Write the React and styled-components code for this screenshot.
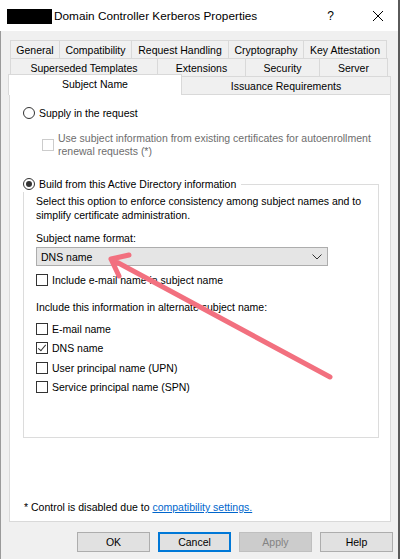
import React from 'react';
import styled, { createGlobalStyle } from 'styled-components';

const GlobalStyle = createGlobalStyle`
	html, body {
		margin: 0;
		padding: 0;
		background: #f0f0f0;
	}
	body {
		font-family: 'Liberation Sans', Arial, sans-serif;
		font-size: 10.5px;
		color: #000;
	}
`;

const row1 = [
	['General', 50],
	['Compatibility', 73],
	['Request Handling', 98],
	['Cryptography', 76],
	['Key Attestation', 84],
];
const row2 = [
	['Superseded Templates', 148],
	['Extensions', 89],
	['Security', 75],
	['Server', 69],
];
const altNames = [
	['E-mail name', false],
	['DNS name', true],
	['User principal name (UPN)', false],
	['Service principal name (SPN)', false],
];

const App = () => {
	return (
		<>
			<GlobalStyle />
			<Window>
				<TitleBar>
					<Redacted />
					<Title>Domain Controller Kerberos Properties</Title>
					<TitleButtons>
						<HelpGlyph>?</HelpGlyph>
						<CloseGlyph>
							<svg width='12' height='12' viewBox='0 0 12 12'>
								<path d='M1 1 L11 11 M11 1 L1 11' stroke='#000' strokeWidth='1' fill='none' />
							</svg>
						</CloseGlyph>
					</TitleButtons>
				</TitleBar>

				<Body>
					<TabRow>
						{row1.map(([label, w]) => (
							<Tab key={label} w={w}>
								{label}
							</Tab>
						))}
					</TabRow>
					<TabRow>
						{row2.map(([label, w]) => (
							<Tab key={label} w={w}>
								{label}
							</Tab>
						))}
					</TabRow>
					<ActiveRow>
						<ActiveTab>Subject Name</ActiveTab>
						<Tab w={210}>Issuance Requirements</Tab>
					</ActiveRow>

					<Panel>
						<OptionRow indent={13} top={11}>
							<Radio />
							<span>Supply in the request</span>
						</OptionRow>
						<DisabledOption>
							<Check disabled />
							<span>
								Use subject information from existing certificates for autoenrollment
								<br />
								renewal requests (*)
							</span>
						</DisabledOption>

						<Group>
							<Legend>
								<Radio checked />
								<span>Build from this Active Directory information</span>
							</Legend>
							<Text>
								Select this option to enforce consistency among subject names and to
								<br />
								simplify certificate administration.
							</Text>
							<Label top={9}>Subject name format:</Label>
							<Select>
								<span>DNS name</span>
								<svg width='10' height='6' viewBox='0 0 10 6'>
									<path d='M0.5 0.5 L5 5 L9.5 0.5' stroke='#333' strokeWidth='1' fill='none' />
								</svg>
							</Select>
							<OptionRow top={7}>
								<Check />
								<span>Include e-mail name in subject name</span>
							</OptionRow>
							<Label top={13}>Include this information in alternate subject name:</Label>
							<CheckList>
								{altNames.map(([label, on]) => (
									<OptionRow key={label}>
										<Check checked={on} />
										<span>{label}</span>
									</OptionRow>
								))}
							</CheckList>
						</Group>

						<Footer>
							* Control is disabled due to <LinkText href='#'>compatibility settings.</LinkText>
						</Footer>
					</Panel>

					<Buttons>
						<Button>OK</Button>
						<Button focused>Cancel</Button>
						<Button disabled>Apply</Button>
						<Button>Help</Button>
					</Buttons>
				</Body>

				{/* annotation arrow drawn over the dialog */}
				<Arrow width='400' height='559' viewBox='0 0 400 559'>
					<path
						d='M330 377 L111 259 M111 259 L129 255 M111 259 L119 276'
						stroke='#f2707f'
						strokeWidth='5'
						strokeLinecap='round'
						strokeLinejoin='round'
						fill='none'
					/>
				</Arrow>
			</Window>
		</>
	);
};

export default App;

export const Window = styled.div`
	position: relative;
	width: 400px;
	height: 559px;
	box-sizing: border-box;
	display: flex;
	flex-direction: column;
	background: #f0f0f0;
	border-right: 2px solid #5a5a5a;
	overflow: hidden;
`;
export const TitleBar = styled.div`
	height: 31px;
	flex-shrink: 0;
	background: #fff;
	display: flex;
	align-items: center;
	padding-left: 7px;
	font-size: 11.8px;
`;
export const Redacted = styled.div`
	width: 45px;
	height: 15px;
	background: #000;
	margin-top: 1px;
`;
export const Title = styled.div`
	margin-left: 2px;
`;
export const TitleButtons = styled.div`
	margin-left: auto;
	display: flex;
	align-items: center;
	padding-right: 14px;
	gap: 38px;
`;
export const HelpGlyph = styled.span`
	font-size: 12px;
`;
export const CloseGlyph = styled.span`
	display: flex;
`;
export const Body = styled.div`
	flex: 1;
	display: flex;
	flex-direction: column;
	padding: 9px 7px 0 8px;
	border-left: 1px solid #9a9a9a;
`;
export const TabRow = styled.div`
	display: flex;
	height: 18px;
	padding-left: 1px;
`;
export const Tab = styled.div`
	box-sizing: border-box;
	width: ${({ w }) => w}px;
	height: 18px;
	display: flex;
	align-items: center;
	justify-content: center;
	border: 1px solid #d9d9d9;
	border-bottom: none;
	margin-left: -1px;
	background: #f0f0f0;
	white-space: nowrap;
	&:first-child {
		margin-left: 0;
	}
`;
export const ActiveRow = styled.div`
	display: flex;
	align-items: flex-end;
	height: 20px;
	margin-top: -2px;
	padding-left: 1px;
	position: relative;
	z-index: 1;
`;
export const ActiveTab = styled.div`
	box-sizing: border-box;
	width: 174px;
	height: 21px;
	margin: 0 0 -1px -2px;
	display: flex;
	align-items: center;
	justify-content: center;
	padding-bottom: 2px;
	background: #fff;
	border: 1px solid #d9d9d9;
	border-bottom: none;
`;
export const Panel = styled.div`
	box-sizing: border-box;
	height: 428px;
	background: #fff;
	border: 1px solid #d9d9d9;
	display: flex;
	flex-direction: column;
	padding-bottom: 7px;
`;
export const OptionRow = styled.div`
	display: flex;
	align-items: center;
	height: 14px;
	gap: 4px;
	margin-top: ${({ top }) => top || 0}px;
	padding-left: ${({ indent }) => indent || 0}px;
	white-space: nowrap;
`;
export const DisabledOption = styled.div`
	display: flex;
	align-items: center;
	gap: 4px;
	margin-top: 12px;
	padding-left: 32px;
	line-height: 13px;
	color: #6d6d6d;
`;
export const Radio = styled.span`
	box-sizing: border-box;
	width: 12px;
	height: 12px;
	border-radius: 50%;
	border: 1px solid #333;
	background: #fff;
	flex-shrink: 0;
	display: flex;
	align-items: center;
	justify-content: center;
	&::after {
		content: '';
		display: ${({ checked }) => (checked ? 'block' : 'none')};
		width: 6px;
		height: 6px;
		border-radius: 50%;
		background: #333;
	}
`;
export const Check = styled.span`
	box-sizing: border-box;
	width: 12px;
	height: 12px;
	flex-shrink: 0;
	border: 1px solid ${({ disabled }) => (disabled ? '#cccccc' : '#333')};
	background: #fff;
	position: relative;
	&::after {
		content: '';
		display: ${({ checked }) => (checked ? 'block' : 'none')};
		position: absolute;
		left: 3px;
		top: 0px;
		width: 3px;
		height: 7px;
		border: solid #333;
		border-width: 0 1px 1px 0;
		transform: rotate(40deg);
	}
`;
export const Group = styled.fieldset`
	margin: 18px 0 0 13px;
	width: 356px;
	box-sizing: border-box;
	padding: 2px 0 43px 12px;
	border: 1px solid #dcdcdc;
	min-width: 0;
`;
export const Legend = styled.legend`
	display: flex;
	align-items: center;
	gap: 4px;
	height: 16px;
	padding: 0 5px 0 0;
	margin-left: -13px;
	background: #fff;
`;
export const Text = styled.div`
	line-height: 14px;
`;
export const Label = styled.div`
	line-height: 14px;
	margin-top: ${({ top }) => top}px;
`;
export const Select = styled.div`
	box-sizing: border-box;
	width: 292px;
	height: 19px;
	margin-top: 2px;
	background: #e5e5e5;
	border: 1px solid #adadad;
	display: flex;
	align-items: center;
	justify-content: space-between;
	padding: 0 5px 0 4px;
`;
export const CheckList = styled.div`
	display: flex;
	flex-direction: column;
	gap: 5.4px;
	margin-top: 8px;
`;
export const Footer = styled.div`
	margin-top: auto;
	padding-left: 14px;
	line-height: 14px;
`;
export const LinkText = styled.a`
	color: #0066cc;
	text-decoration: underline;
`;
export const Buttons = styled.div`
	display: flex;
	justify-content: flex-end;
	gap: 8px;
	margin-top: 10px;
	margin-right: -2px;
`;
export const Button = styled.button`
	box-sizing: border-box;
	width: 73px;
	height: 20px;
	font-family: inherit;
	font-size: 10.5px;
	padding: 0;
	background: ${({ disabled }) => (disabled ? '#cccccc' : '#e1e1e1')};
	color: ${({ disabled }) => (disabled ? '#838383' : '#000')};
	border: ${({ focused, disabled }) =>
		focused ? '2px solid #0078d7' : disabled ? '1px solid #bfbfbf' : '1px solid #adadad'};
`;
export const Arrow = styled.svg`
	position: absolute;
	left: 0;
	top: 0;
	pointer-events: none;
`;
